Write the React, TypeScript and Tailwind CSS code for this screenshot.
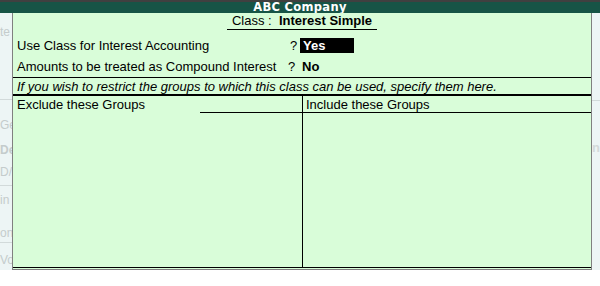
import React from 'react';

const ghostLeft = [
    { text: 'te', cls: 'h-[87px] pt-[12px]', line: true },
    { text: 'Ge', cls: 'h-[40px] pt-[18px]', line: false },
    { text: 'De', cls: 'h-[22px] pt-[3px] font-bold', line: false },
    { text: 'D/', cls: 'h-[24px] pt-[3px]', line: true },
    { text: 'in', cls: 'h-[30px] pt-[7px]', line: false },
    { text: 'on', cls: 'h-[27px] pt-[10px]', line: true },
    { text: 'Vo', cls: 'h-[24px] pt-[10px]', line: false },
];

const App: React.FC = () => {
    return (
        <div className="w-[600px] h-[286px] bg-white overflow-hidden font-['Liberation_Sans',Arial,sans-serif] text-[13px] leading-[15px] text-black">
            {/* title bar */}
            <div className="h-[2px] bg-[#404040]" />
            <div className="h-[11px] bg-[#175446] flex items-center justify-center">
                <span className="font-['DejaVu_Sans',sans-serif] font-bold text-white text-[11.5px] leading-[11px] tracking-[0.3px]">ABC Company</span>
            </div>

            <div className="flex h-[257px]">
                {/* left background area */}
                <div className="w-[12px] bg-[#edf5f5] overflow-hidden flex flex-col text-[#c4cccc] leading-[14px] text-[12px]">
                    {ghostLeft.map((g, i) => (
                        <div key={i} className={`${g.cls} whitespace-nowrap ${g.line ? 'border-b border-[#d2dada]' : ''}`}>{g.text}</div>
                    ))}
                </div>

                {/* main panel */}
                <div className="w-[580px] border-l border-r border-[#808080] flex flex-col bg-[#d9fdd9]">
                    <div className="h-[17px] flex justify-center">
                        <div className="border-b border-black leading-[16px] px-[5px]">
                            Class :&nbsp; <span className="font-bold">Interest Simple</span>
                        </div>
                    </div>
                    <div className="h-[4px]" />
                    <div className="h-[22px] flex items-center pl-[4px]">
                        <span className="w-[273px]">Use Class for Interest Accounting</span>
                        <span className="w-[10px]">?</span>
                        <span className="w-[54px] h-[15px] bg-black text-white font-bold pl-[3px] leading-[15px]">Yes</span>
                    </div>
                    <div className="h-[22px] flex items-center pl-[4px] border-b border-black">
                        <span className="w-[271px]">Amounts to be treated as Compound Interest</span>
                        <span className="w-[14px]">?</span>
                        <span className="font-bold">No</span>
                    </div>
                    <div className="h-[18px] flex items-center pl-[4px] italic border-b-2 border-black whitespace-nowrap">
                        If you wish to restrict the groups to which this class can be used, specify them here.
                    </div>
                    <div className="flex flex-1">
                        <div className="w-[289px] flex flex-col">
                            <div className="h-[16px] flex items-center pl-[4px]">Exclude these Groups</div>
                            <div className="h-[1px] ml-[187px] bg-black" />
                            <div className="flex-1 border-b border-black" />
                        </div>
                        <div className="w-[1px] bg-black" />
                        <div className="flex-1 flex flex-col">
                            <div className="h-[16px] flex items-center pl-[3px]">Include these Groups</div>
                            <div className="h-[1px] bg-black" />
                            <div className="flex-1 border-b border-black" />
                        </div>
                    </div>
                    <div className="h-[1px]" />
                    <div className="h-[1px] bg-[#808080] -mx-[1px]" />
                </div>

                {/* right background area */}
                <div className="flex-1 bg-[#edf5f5] flex flex-col">
                    <div className="h-[88px] border-b border-[#d2dada]" />
                    <div className="pt-[40px] text-[13px] text-[#d4dada] leading-[14px] font-bold">n</div>
                </div>
            </div>
        </div>
    );
};

export default App;
